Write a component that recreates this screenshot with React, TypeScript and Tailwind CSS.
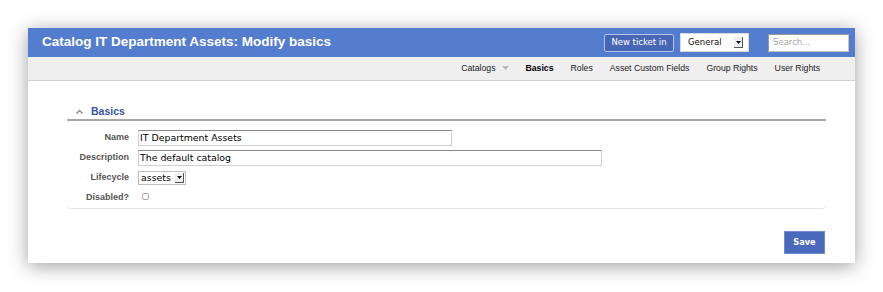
const navItems = [
  { label: 'Basics', active: true },
  { label: 'Roles', active: false },
  { label: 'Asset Custom Fields', active: false },
  { label: 'Group Rights', active: false },
  { label: 'User Rights', active: false },
]

function DropArrow({ className }: { className: string }) {
  return (
    <span className={className}>
      <svg width="5" height="3" viewBox="0 0 5 3">
        <path d="M0 0h5L2.5 3z" fill="#111" />
      </svg>
    </span>
  )
}

function Row({ label, children }: { label: string; children: React.ReactNode }) {
  return (
    <div className="flex h-[20px] items-center">
      <div className="w-[62px] shrink-0 text-right text-[9px] font-bold text-[#555] font-['Liberation_Sans',Arial,sans-serif]">
        {label}
      </div>
      <div className="ml-[9px] flex items-center">{children}</div>
    </div>
  )
}

export default function App() {
  return (
    <div className="h-[292px] w-full bg-white pl-[28px] pt-[28px]">
      <div className="flex h-[235px] w-[827px] flex-col bg-white shadow-[0_3px_18px_rgba(0,0,0,0.38)]">
        {/* Title bar */}
        <div className="flex h-[29px] shrink-0 items-center bg-[#547dcf] pl-[14px] pr-[6px]">
          <div className="flex-1 text-[13.5px] font-bold text-white font-['Liberation_Sans',Arial,sans-serif]">
            Catalog IT Department Assets: Modify basics
          </div>
          <button className="flex h-[18px] w-[70px] items-center justify-center rounded-[2px] border border-[#b3c4ea] bg-[#4767b6] text-[8.5px] text-white font-['DejaVu_Sans',sans-serif]">
            New ticket in
          </button>
          <div className="ml-[6px] flex h-[19px] w-[69px] items-center border border-[#d8d8d8] bg-white pl-[7px] pr-[5px] text-[8.5px] text-[#111] font-['DejaVu_Sans',sans-serif]">
            <span className="flex-1">General</span>
            <DropArrow className="flex h-[11px] w-[9px] items-center justify-center border-b border-r border-[#555] bg-[#eee]" />
          </div>
          <div className="ml-[19px] flex h-[18px] w-[81px] items-center border border-[#c4c4c4] border-l-[#999] border-t-[#999] bg-white pl-[4px] text-[8.5px] text-[#aaa] font-['DejaVu_Sans',sans-serif]">
            Search...
          </div>
        </div>

        {/* Page nav */}
        <div className="flex h-[24px] shrink-0 items-center justify-end gap-[17px] border-b border-[#d0d0d0] bg-[#efefef] pr-[35px] text-[8.7px] text-[#222] font-['Liberation_Sans',Arial,sans-serif]">
          <span className="flex items-center">
            Catalogs
            <svg className="ml-[6px]" width="7" height="4" viewBox="0 0 7 4">
              <path d="M0 0h7L3.5 4z" fill="#bbb" />
            </svg>
          </span>
          {navItems.map(item => (
            <span key={item.label} className={item.active ? 'font-bold text-black' : ''}>
              {item.label}
            </span>
          ))}
        </div>

        {/* Content */}
        <div className="ml-[39px] mr-[29px] pt-[23px]">
          <div className="flex h-[17px] items-end border-b-2 border-[#a8a8a8] pb-[1px] pl-[9px]">
            <svg className="mb-[4px]" width="7" height="5" viewBox="0 0 7 5">
              <path d="M0.5 4.5L3.5 1.5L6.5 4.5" fill="none" stroke="#777" strokeWidth="1.1" />
            </svg>
            <span className="ml-[8px] text-[10.5px] font-bold leading-[13px] text-[#3c51a6] font-['Liberation_Sans',Arial,sans-serif]">
              Basics
            </span>
          </div>

          <div className="mt-[7px] rounded-b-[4px] border-b border-[#e6e6e6]">
            <Row label="Name">
              <div className="flex h-[16px] w-[314px] items-center border border-[#cfcfcf] border-t-[#8a8a8a] pl-[1px] text-[9.4px] text-black font-['DejaVu_Sans',sans-serif]">
                IT Department Assets
              </div>
            </Row>
            <Row label="Description">
              <div className="flex h-[16px] w-[464px] items-center border border-[#cfcfcf] border-t-[#8a8a8a] pl-[1px] text-[9.4px] text-black font-['DejaVu_Sans',sans-serif]">
                The default catalog
              </div>
            </Row>
            <Row label="Lifecycle">
              <div className="flex h-[14px] w-[48px] items-center border border-[#bdbdbd] pl-[2px] pr-[1px] text-[9.4px] text-black font-['DejaVu_Sans',sans-serif]">
                <span className="flex-1">assets</span>
                <DropArrow className="flex h-[10px] w-[9px] items-center justify-center border-b border-r border-[#555] bg-[#eee]" />
              </div>
            </Row>
            <Row label="Disabled?">
              <span className="mb-[3px] ml-[4px] h-[7px] w-[7px] rounded-[2px] border border-[#a8a8a8] bg-white" />
            </Row>
          </div>

          <div className="mt-[22px] flex justify-end pr-[1px]">
            <button className="flex h-[23px] w-[41px] items-center justify-center border border-[#6d8bd0] bg-[#4a69bd] text-[8.2px] font-bold text-white font-['DejaVu_Sans',sans-serif]">
              Save
            </button>
          </div>
        </div>
      </div>
    </div>
  )
}
